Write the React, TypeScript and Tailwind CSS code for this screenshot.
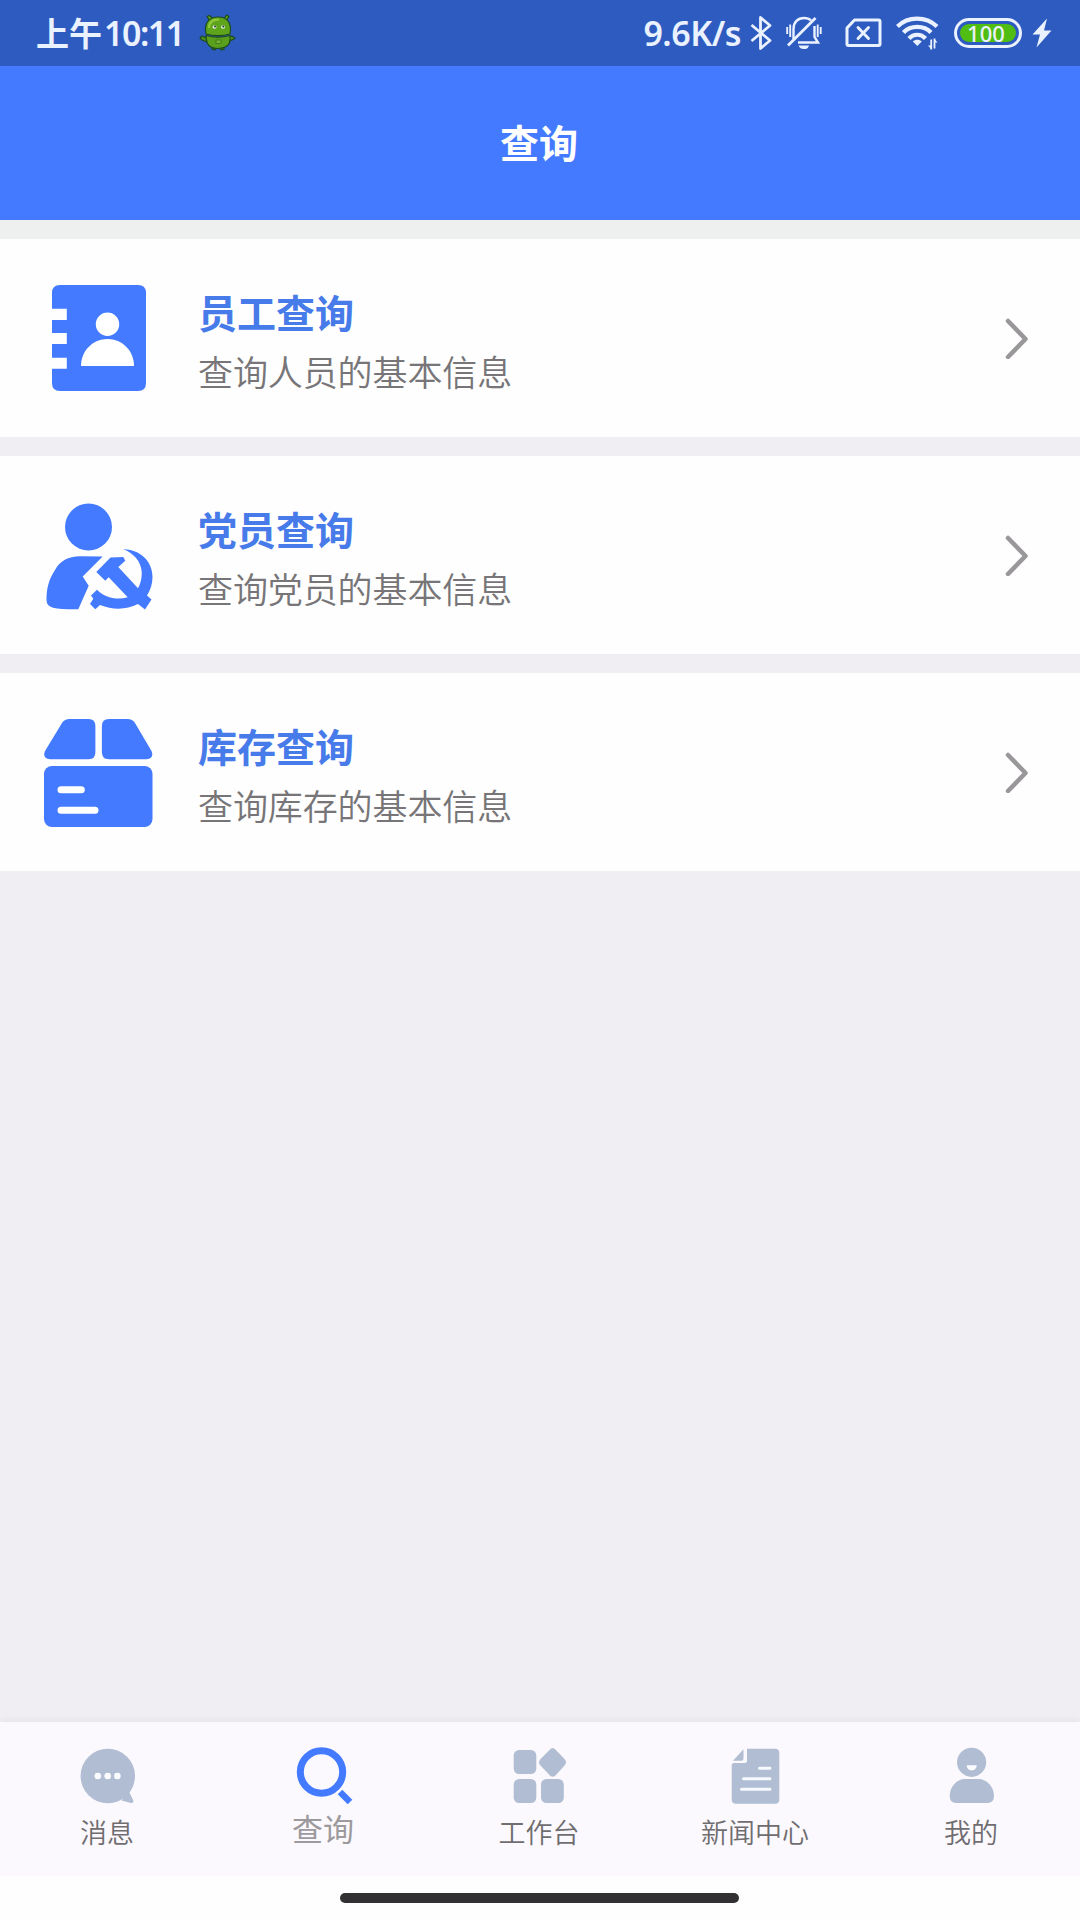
import React, { useState } from 'react';

type IconProps = { className?: string };

const AndroidIcon = () => (
  <svg width="38" height="38" viewBox="0 0 38 38" className="ml-[15px]">
    <g stroke="#1d4a1c" strokeWidth="1.2" strokeLinejoin="round">
      <path d="M11 7L8 2.500L10.500 1.500L14 5M25 5L27.500 1L30 2.500L27 7" fill="#5da31a" />
      <path d="M8 24L3 22L1 24L3 26L8 28M30 23L33 22L36 24.500L33 26L30 27" fill="#4d8f1a" />
      <path d="M14 32L13 35L16 36L17 33M22 33V36L25 35.500L24.500 32" fill="#4d8f1a" />
      <path d="M7 20C5 10 9 3 19 3S33 10 31 20C24 22 14 22 7 20Z" fill="#5fa51c" />
      <path d="M7 21.500C14 23.500 24 23.500 31 21.500C32 27 30 32 26 33C22 35 15 35 12 33C8 31 7 27 7 21.500Z" fill="#5aa01c" />
    </g>
    <path d="M10 14C10 8 14 5.500 20 5.500" fill="none" stroke="#93c93c" strokeWidth="2" />
    <ellipse cx="15.500" cy="13" rx="2" ry="1.800" fill="#e7f5e6" />
    <ellipse cx="24" cy="13" rx="2" ry="1.800" fill="#e7f5e6" />
    <circle cx="16" cy="12.500" r="1" fill="#20382c" />
    <circle cx="24.300" cy="12.500" r="1" fill="#20382c" />
    <rect x="17" y="26" width="5" height="3.500" fill="#7ab336" stroke="#3b761a" strokeWidth=".8" />
  </svg>
);

const BluetoothIcon = () => (
  <svg width="22" height="36" viewBox="0 0 22 36" fill="none" stroke="#eaf1ff" strokeWidth="2.800" strokeLinejoin="round" className="ml-[9px]">
    <path d="M1.500 10L20 25.500L10.500 33.500V2.500L20 10.500L1.500 26" />
  </svg>
);

const MutedBellIcon = () => (
  <svg width="36" height="36" viewBox="0 0 36 36" fill="none" stroke="#eaf1ff" strokeWidth="2.400" className="ml-[14px]">
    <path d="M7.500 24V14C7.500 7 12 3 18 3C21 3 23.500 4 25 5.500M28.500 11V22L32 27.500H12" />
    <path d="M2 30.500L29.500 3" strokeWidth="2.800" />
    <path d="M1.200 12V19M4.200 9.500V22M31.700 9.500V22M34.700 12V19" strokeWidth="1.900" />
    <path d="M12.500 30.500H23C22 33.500 20.500 34 17.800 34S13.500 33 12.500 30.500Z" fill="#eaf1ff" stroke="none" />
  </svg>
);

const NoSimIcon = () => (
  <svg width="37" height="30" viewBox="0 0 37 30" fill="none" stroke="#eaf1ff" strokeWidth="3" strokeLinejoin="round" className="ml-[23px]">
    <path d="M9.500 2H33.500Q35 2 35 3.500V26Q35 27.500 33.500 27.500H3.500Q2 27.500 2 26V10Z" />
    <path d="M13 9.500L23.500 20.500M23.500 9.500L13 20.500" strokeWidth="2.900" strokeLinecap="round" />
  </svg>
);

const WifiIcon = () => (
  <svg width="43" height="36" viewBox="0 0 43 36" fill="none" stroke="#eaf1ff" strokeWidth="4.200" className="ml-[14px]">
    <path d="M1.500 11.500C12 1 30 1 41 11.500" />
    <path d="M7.500 17.500C14.500 10 28 10 35 17.500" />
    <path d="M13 23.500C17.500 18.500 25 18.500 29.500 23.500" />
    <path d="M21.300 31L16.800 26.500C19 24 23.600 24 25.800 26.500Z" fill="#eaf1ff" stroke="none" />
    <path d="M35.200 24.500V34.500M38.500 23.500V33.500" strokeWidth="1.800" />
    <path d="M32 30.500H35V34ZM38.500 24V27.500H41.500Z" fill="#eaf1ff" stroke="none" />
  </svg>
);

const BoltIcon = () => (
  <svg width="20" height="30" viewBox="0 0 20 30" fill="#eaf1ff" className="ml-[10px]">
    <path d="M15 .5L.5 16.500H8L4.500 29.500L19.500 12.500H12Z" />
  </svg>
);

const EmployeeIcon = () => (
  <svg width="110" height="110" viewBox="0 0 110 110" fill="#437aff">
    <path d="M16 2H94Q102 2 102 10V100Q102 108 94 108H16Q8 108 8 100V85.700H22.800V74.700H8V61H22.800V50H8V37H22.800V25.700H8V10Q8 2 16 2Z" />
    <circle cx="63.500" cy="41.300" r="11.700" fill="#fff" />
    <path d="M37 83C37 68 48.500 56 63.500 56S90 68 90 83Z" fill="#fff" />
  </svg>
);

const PartyMemberIcon = () => (
  <svg width="110" height="110" viewBox="0 0 110 110" fill="#437aff">
    <circle cx="44.500" cy="27" r="23.500" />
    <path d="M58.700 56.500L38.700 76.500L44.700 85.700L34.300 109.300C24 109.500 15 109 9 107.700Q2.500 106 2.500 100C2.500 88 5 79 11 70C16 61 24 56.300 36 56.300Z" />
    <path d="M79.300 49.300C96 49.500 108.500 61 108.500 77C108.500 84 106.500 90 103 95.500L107.500 99.500L101 109.500L94 104C82 110 69 110 56 105L51.300 109.300L46 104L49.300 98.700L47 95.500L53 89.700C60 97 72 100.500 83.700 97.300L64.700 77.300L61.300 80.700L52.300 72L66.500 57.500L79.300 57L81.300 60.700L74.300 67L94 88.200C97 83 98 77 97.700 71.700C97 61 89 53 79.300 49.300Z" />
  </svg>
);

const InventoryIcon = () => (
  <svg width="110" height="110" viewBox="0 0 110 110" fill="#437aff">
    <path d="M25.500 2H44.500Q51.400 2 51.400 9V35.300Q51.400 42.300 44.500 42.300H6Q-2 41.500 1 34L18 6Q20.500 2 25.500 2Z" />
    <path d="M64.900 2H83.500Q88.500 2 91 6L107.500 34Q110.500 41.500 102.500 42.300H64.900Q57.900 42.300 57.900 35.300V9Q57.900 2 64.900 2Z" />
    <rect y="49" width="108.500" height="61" rx="8" />
    <path d="M17 72.800H37.300M17 93.300H51" stroke="#fff" strokeWidth="7" strokeLinecap="round" />
  </svg>
);

const MessageIcon = ({ className }: IconProps) => (
  <svg width="60" height="60" viewBox="0 0 60 60" fill="currentColor" className={className}>
    <circle cx="29.800" cy="32" r="27.200" />
    <path d="M52 44L51.500 48.500L55.500 57Q55.500 59.500 53 59L43.500 56.500Z" />
    <path d="M19.800 32h.01M29.700 32h.01M39.400 32h.01" stroke="#fbfcff" strokeWidth="6.600" strokeLinecap="round" />
  </svg>
);

const SearchIcon = ({ className }: IconProps) => (
  <svg width="60" height="60" viewBox="0 0 60 60" fill="none" stroke="currentColor" className={className}>
    <circle cx="27.500" cy="28" r="21.200" strokeWidth="7" />
    <path d="M46 48L56 58" strokeWidth="6.500" />
  </svg>
);

const WorkbenchIcon = ({ className }: IconProps) => (
  <svg width="60" height="60" viewBox="0 0 60 60" fill="currentColor" className={className}>
    <rect x="3.700" y="6" width="22.600" height="24" rx="5.500" />
    <rect x="3.700" y="35" width="22.600" height="24" rx="5.500" />
    <rect x="31" y="35" width="22.800" height="24" rx="5.500" />
    <path d="M39 6.500Q42.700 1.500 46.400 6.500L54.500 15Q57.500 18.300 54.500 21.500L46.400 30.500Q42.700 35 39 30.500L30.500 21.500Q27.500 18.300 30.500 15Z" />
  </svg>
);

const NewsIcon = ({ className }: IconProps) => (
  <svg width="60" height="60" viewBox="0 0 60 60" fill="currentColor" className={className}>
    <path d="M21 4.700H49Q53.300 4.700 53.300 9V55.500Q53.300 59.700 49 59.700H10Q5.700 59.700 5.700 55.500V21Q5.700 19 8 19H19Q21 19 21 17Z" />
    <path d="M17.500 5.300V14.500Q17.500 16.700 15.500 16.700H7Z" />
    <path d="M33.500 24.300H44M17.500 34.700H44M15.500 45.300H44" stroke="#f6faff" strokeWidth="3" strokeLinecap="round" />
  </svg>
);

const MeIcon = ({ className }: IconProps) => (
  <svg width="60" height="60" viewBox="0 0 60 60" fill="currentColor" className={className}>
    <circle cx="29.600" cy="18.300" r="14.600" />
    <path d="M24.700 21.300H34.700C34.700 24.500 32.500 26.500 29.700 26.500S24.700 24.500 24.700 21.300Z" fill="#fbfcff" />
    <path d="M23 35H36.500C45 35 52 43 52 52Q52 59 45.500 59H14.200Q7.700 59 7.700 52C7.700 43 14.500 35 23 35Z" />
  </svg>
);

const queries = [
  { title: '员工查询', description: '查询人员的基本信息', icon: EmployeeIcon },
  { title: '党员查询', description: '查询党员的基本信息', icon: PartyMemberIcon },
  { title: '库存查询', description: '查询库存的基本信息', icon: InventoryIcon },
];

const tabs = [
  { label: '消息', icon: MessageIcon },
  { label: '查询', icon: SearchIcon },
  { label: '工作台', icon: WorkbenchIcon },
  { label: '新闻中心', icon: NewsIcon },
  { label: '我的', icon: MeIcon },
];

const StatusBar = () => (
  <div className="flex h-[66px] shrink-0 items-center bg-[#2e5bbf] pl-9 text-[#eaf1ff]">
    <span className="pb-0.5 text-[33px] leading-none font-bold">上午</span>
    <span className="ml-0.5 font-['Noto_Sans'] text-[34px] leading-none font-semibold tracking-[-1.5px]">10:11</span>
    <AndroidIcon />
    <div className="ml-auto flex items-center pr-[28px]">
      <span className="font-['Noto_Sans'] text-[34px] leading-none font-semibold tracking-[-0.5px]">9.6K/s</span>
      <BluetoothIcon />
      <MutedBellIcon />
      <NoSimIcon />
      <WifiIcon />
      <div className="ml-[15px] flex h-[30px] w-[68px] rounded-full border-3 border-[#eaf1ff] p-[3px]">
        <div className="flex flex-1 items-center justify-center rounded-full bg-[#4fbd12] pr-1 font-['Noto_Sans'] text-[22px] leading-none font-medium">
          100
        </div>
      </div>
      <BoltIcon />
    </div>
  </div>
);

const App = () => {
  const [activeTab, setActiveTab] = useState('查询');

  return (
    <div className="flex h-[1920px] w-[1080px] flex-col overflow-hidden bg-[#f0eef2] font-['Noto_Sans_CJK_SC',sans-serif]">
      <StatusBar />
      <header className="flex h-[154px] shrink-0 items-center justify-center bg-[#437aff] pr-0.5 pb-1">
        <h1 className="text-[39px] leading-none font-bold text-white">查询</h1>
      </header>

      <main className="flex flex-1 flex-col gap-[19px] border-t-[19px] border-[#eef0f0]">
        {queries.map(({ title, description, icon: Icon }) => (
          <button key={title} className="flex h-[198px] items-center bg-[#fefefe] pr-[50px] pl-11 text-left">
            <Icon />
            <div className="ml-11 flex flex-1 flex-col gap-[22px] pt-[3px]">
              <h2 className="text-[39px] leading-[39px] font-bold text-[#477be9]">{title}</h2>
              <p className="text-[35px] leading-[35px] font-[350] tracking-[-0.1px] text-[#777578]">{description}</p>
            </div>
            <svg width="26" height="42" viewBox="0 0 26 42" fill="none" stroke="#99979a" strokeWidth="4.500" strokeLinecap="round" strokeLinejoin="round">
              <path d="M4 4L21.500 22L4 40" />
            </svg>
          </button>
        ))}
      </main>

      <nav className="grid h-[154px] shrink-0 grid-cols-5 bg-[#fbf9fd] shadow-[0_-1px_8px_rgba(0,0,0,0.06)]">
        {tabs.map(({ label, icon: Icon }) => {
          const active = label === activeTab;
          return (
            <button key={label} onClick={() => setActiveTab(label)} className="flex flex-col items-center pt-[22px]">
              <Icon className={active ? 'text-[#437aff]' : 'text-[#b1bdd2]'} />
              <span
                className={
                  active
                    ? 'mt-2 pr-0.5 text-[31px] leading-[31px] text-[#9c9a9d]'
                    : 'mt-[14px] pr-0.5 text-[27px] leading-[27px] font-[350] text-[#6f6d70]'
                }
              >
                {label}
              </span>
            </button>
          );
        })}
      </nav>
      <div className="flex h-[44px] shrink-0 justify-center bg-[#fefefe] pt-[17px] pr-0.5">
        <div className="h-[10px] w-[399px] rounded-full bg-[#333034]" />
      </div>
    </div>
  );
};

export default App;
